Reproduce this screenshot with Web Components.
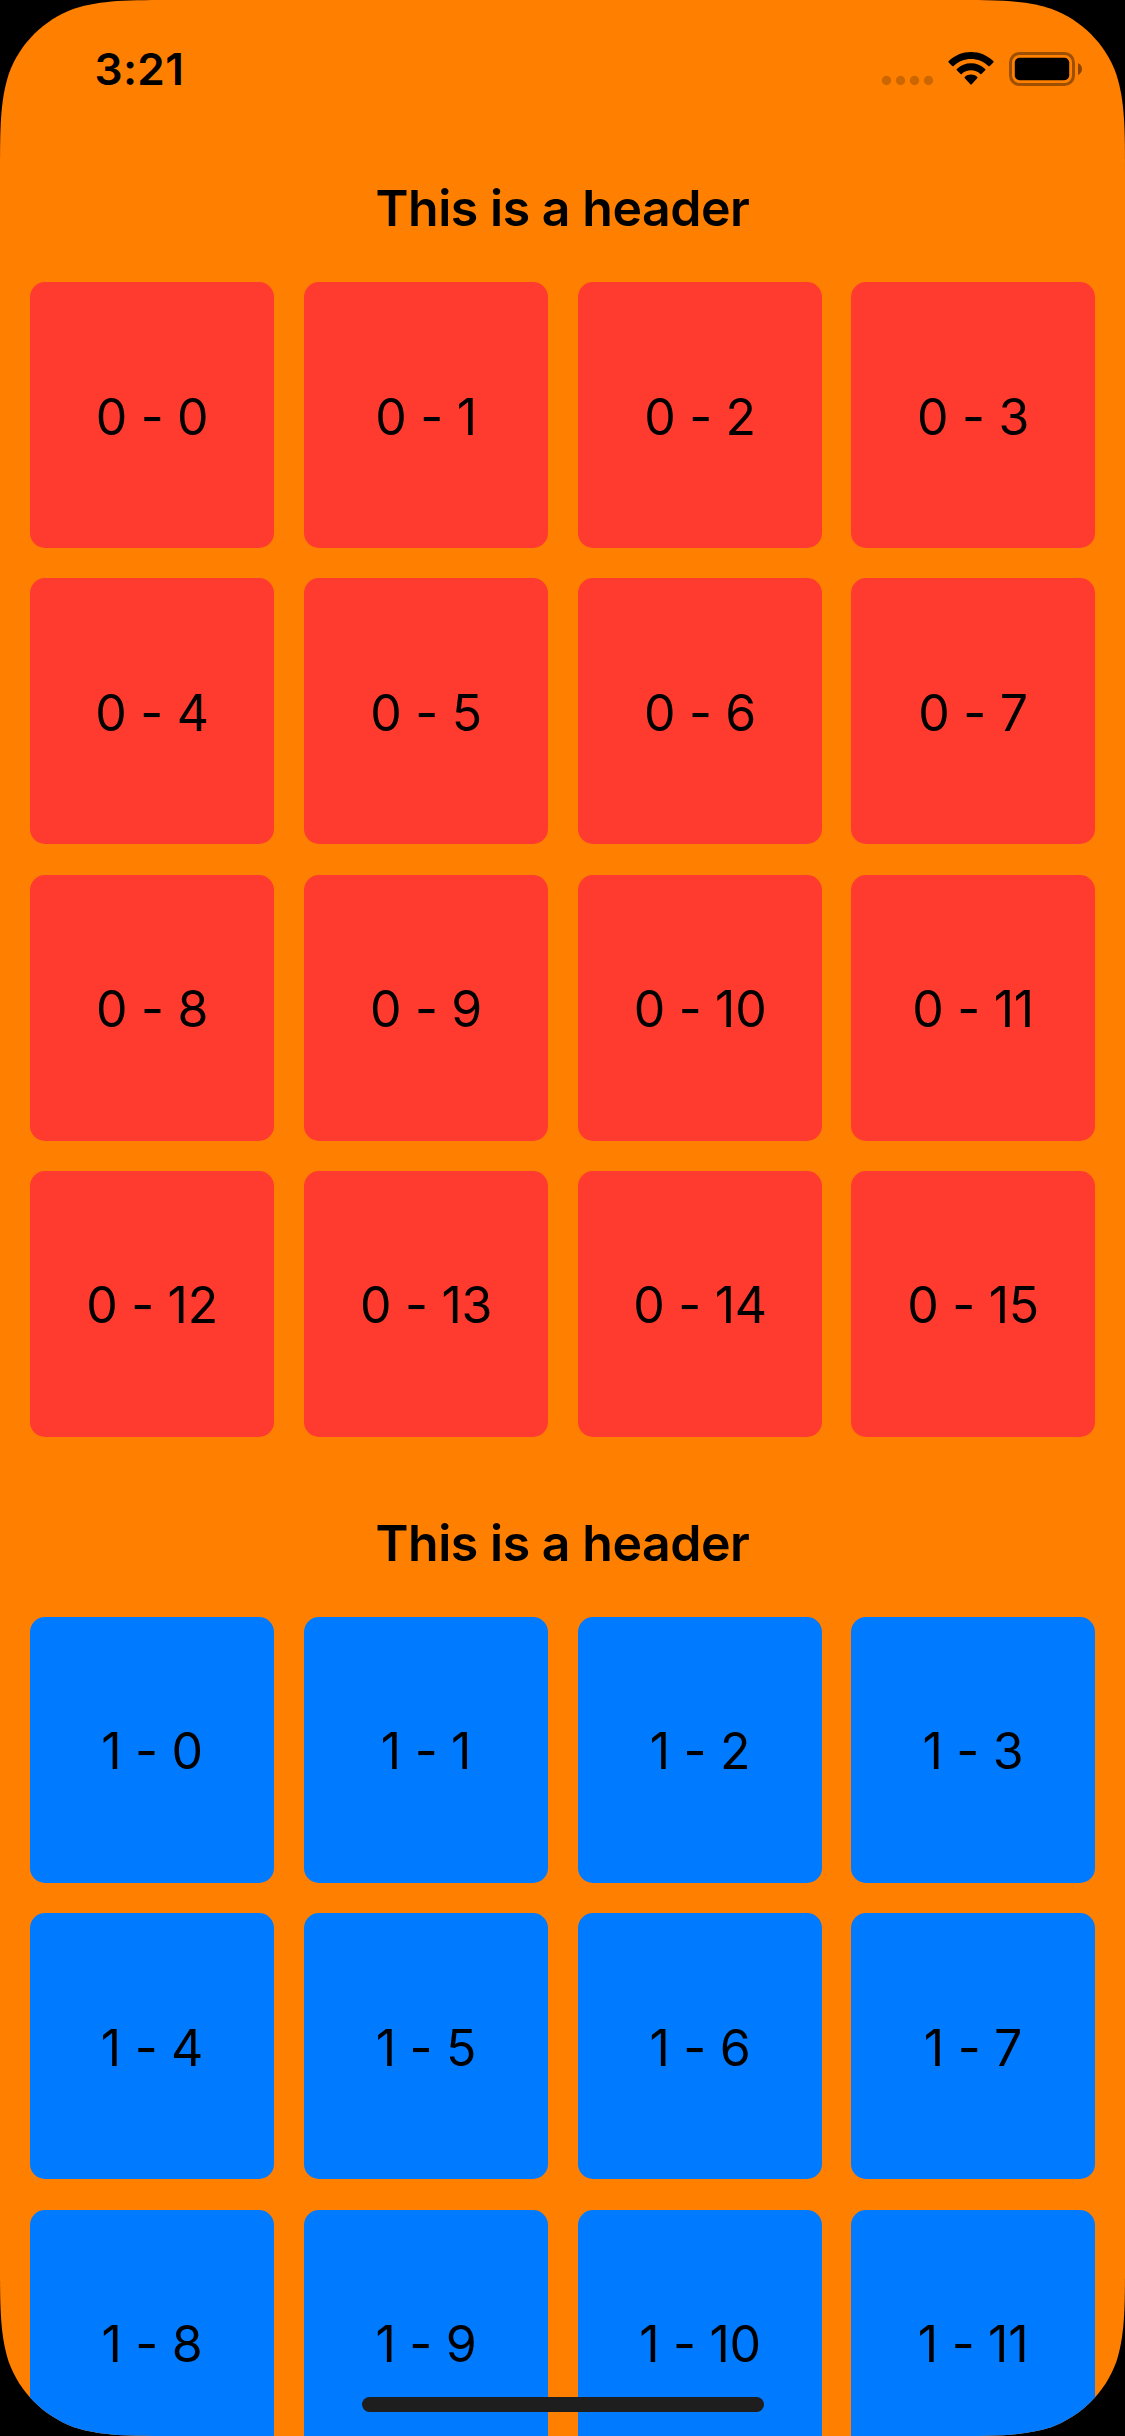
<!DOCTYPE html>
<html lang="en">
<head>
<meta charset="utf-8">
<title>Grid</title>
<style>
html, body { margin: 0; background: #000; }
body { width: 1125px; height: 2436px; overflow: hidden; font-family: Inter, "Liberation Sans", sans-serif; color: #000; }
</style>
</head>
<body>
<phone-screen>
  <status-bar slot="status">3:21</status-bar>
  <grid-section heading="This is a header" section="0" count="16" style="--tile:#ff3b30"></grid-section>
  <grid-section heading="This is a header" section="1" count="12" style="--tile:#007aff"></grid-section>
</phone-screen>
<script>
class PhoneScreen extends HTMLElement {
  constructor() {
    super();
    this.attachShadow({ mode: 'open' }).innerHTML = `
      <style>
        :host { display: flex; flex-direction: column; position: relative; width: 1125px; height: 2436px; overflow: hidden; background: #ff8000;
          clip-path: path('M178.85 0 L946.15 0 C997.65 0 1023.4 0 1051.11 8.76 C1081.38 19.78 1105.22 43.62 1116.24 73.89 C1125 101.6 1125 127.35 1125 178.85 L1125 2257.15 C1125 2308.65 1125 2334.4 1116.24 2362.11 C1105.22 2392.38 1081.38 2416.22 1051.11 2427.24 C1023.4 2436 997.65 2436 946.15 2436 L178.85 2436 C127.35 2436 101.6 2436 73.89 2427.24 C43.62 2416.22 19.78 2392.38 8.76 2362.11 C0 2334.4 0 2308.65 0 2257.15 L0 178.85 C0 127.35 0 101.6 8.76 73.89 C19.78 43.62 43.62 19.78 73.89 8.76 C101.6 0 127.35 0 178.85 0 Z'); }
        .content { display: flex; flex-direction: column; gap: 30px; }
        .home { position: absolute; left: 362px; bottom: 24px; width: 402px; height: 15px; border-radius: 8px; background: #1e1e1e; }
      </style>
      <slot name="status"></slot>
      <div class="content"><slot></slot></div>
      <div class="home"></div>`;
  }
}
class StatusBar extends HTMLElement {
  constructor() {
    super();
    this.attachShadow({ mode: 'open' }).innerHTML = `
      <style>
        :host { display: flex; flex: none; box-sizing: border-box; height: 132px; padding: 41px 42px 0 94.5px; justify-content: space-between; align-items: flex-start; }
        .time { font-size: 44.2px; line-height: 56px; font-weight: 600; letter-spacing: .3px; }
        svg { display: block; margin-top: 9px; }
      </style>
      <span class="time"><slot></slot></span>
      <svg width="203" height="40" viewBox="880 50 203 40">
        <g fill="#000" fill-opacity=".2"><circle cx="886.5" cy="80.5" r="4.7"/><circle cx="900.5" cy="80.5" r="4.7"/><circle cx="914.5" cy="80.5" r="4.7"/><circle cx="928.5" cy="80.5" r="4.7"/></g>
        <path d="M971 52 C979.4 52 987.3 55.3 993.3 61 Q994 61.7 993.3 62.4 L989.8 65.9 Q989.1 66.6 988.4 65.9 C983.7 61.4 977.5 58.9 971 58.9 C964.5 58.9 958.3 61.4 953.6 65.9 Q952.9 66.6 952.2 65.9 L948.7 62.4 Q948 61.7 948.7 61 C954.7 55.3 962.6 52 971 52 Z
          M971 63.3 C976.3 63.3 981.3 65.3 985.2 68.9 Q985.9 69.6 985.2 70.3 L981.7 73.8 Q981 74.5 980.3 73.9 C977.8 71.6 974.5 70.3 971 70.3 C967.5 70.3 964.2 71.6 961.7 73.9 Q961 74.5 960.3 73.8 L956.8 70.3 Q956.1 69.6 956.8 68.9 C960.7 65.3 965.7 63.3 971 63.3 Z
          M971 74.5 C973.3 74.5 975.5 75.3 977.1 76.7 Q977.9 77.4 977.2 78.2 L971.7 84.2 Q971 84.9 970.3 84.2 L964.8 78.2 Q964.1 77.4 964.9 76.7 C966.5 75.3 968.7 74.5 971 74.5 Z"/>
        <rect x="1010.5" y="53.5" width="63" height="31" rx="9" fill="none" stroke="#000" stroke-opacity=".38" stroke-width="3"/>
        <rect x="1014.8" y="57.8" width="54.4" height="22.4" rx="4.8"/>
        <path d="M1078 63 Q1082 65 1082 69 Q1082 73 1078 75 Z" fill-opacity=".45"/>
      </svg>`;
  }
}
class GridTile extends HTMLElement {
  constructor() {
    super();
    this.attachShadow({ mode: 'open' }).innerHTML = `
      <style>
        :host { display: flex; box-sizing: border-box; align-items: center; justify-content: center; width: 244px; height: 266px; padding-top: 3px; border-radius: 15px; background: var(--tile); font-size: 50px; line-height: 60px; letter-spacing: -.3px; font-feature-settings: "calt" 0; }
      </style>
      <span><slot></slot></span>`;
  }
}
class GridSection extends HTMLElement {
  connectedCallback() {
    const s = this.getAttribute('section'), n = +this.getAttribute('count');
    this.attachShadow({ mode: 'open' }).innerHTML = `
      <style>
        :host { display: block; }
        h2 { margin: 0; box-sizing: border-box; height: 150px; padding-top: 46px; text-align: center; font-size: 50px; line-height: 60px; font-weight: 600; letter-spacing: -.45px; }
        .grid { display: grid; grid-template-columns: 274px 274px 273px 244px; row-gap: 30.33px; padding: 0 30px; }
      </style>
      <h2>${this.getAttribute('heading')}</h2>
      <div class="grid">${Array.from({ length: n }, (_, i) => `<grid-tile>${s} - ${i}</grid-tile>`).join('')}</div>`;
  }
}
customElements.define('grid-tile', GridTile);
customElements.define('grid-section', GridSection);
customElements.define('status-bar', StatusBar);
customElements.define('phone-screen', PhoneScreen);
</script>
</body>
</html>
